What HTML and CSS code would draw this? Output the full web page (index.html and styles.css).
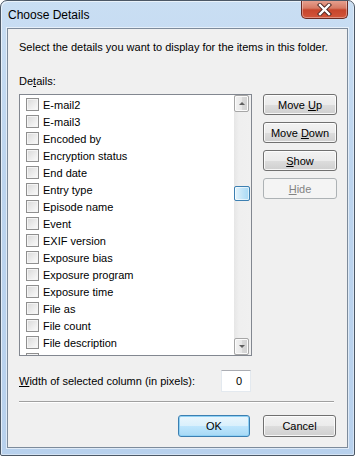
FILE: index.html
```html
<!DOCTYPE html>
<html lang="en">
<head>
  <meta charset="UTF-8">
  <title>Choose Details</title>
  <link rel="stylesheet" href="styles.css">
</head>
<body>
  <div class="window">
    <div class="titlebar">
      <span class="title">Choose Details</span>
      <div class="close-btn">
        <svg width="15" height="13" viewBox="0 0 15 13">
          <path d="M3 2 L12 11 M12 2 L3 11" stroke="#4a2420" stroke-width="4.2" stroke-linecap="square"/>
          <path d="M3 2 L12 11 M12 2 L3 11" stroke="#fff" stroke-width="2.4" stroke-linecap="square"/>
        </svg>
      </div>
    </div>
    <div class="client">
      <p class="intro">Select the details you want to display for the items in this folder.</p>
      <div class="details-label">De<u>t</u>ails:</div>
      <div class="details-row">
        <div class="listbox">
          <ul class="items">
            <li><span class="check"></span><span>E-mail2</span></li>
            <li><span class="check"></span><span>E-mail3</span></li>
            <li><span class="check"></span><span>Encoded by</span></li>
            <li><span class="check"></span><span>Encryption status</span></li>
            <li><span class="check"></span><span>End date</span></li>
            <li><span class="check"></span><span>Entry type</span></li>
            <li><span class="check"></span><span>Episode name</span></li>
            <li><span class="check"></span><span>Event</span></li>
            <li><span class="check"></span><span>EXIF version</span></li>
            <li><span class="check"></span><span>Exposure bias</span></li>
            <li><span class="check"></span><span>Exposure program</span></li>
            <li><span class="check"></span><span>Exposure time</span></li>
            <li><span class="check"></span><span>File as</span></li>
            <li><span class="check"></span><span>File count</span></li>
            <li><span class="check"></span><span>File description</span></li>
            <li><span class="check"></span></li>
          </ul>
          <div class="scrollbar">
            <div class="sb-btn"><span class="arrow-up"></span></div>
            <div class="sb-track"><div class="sb-thumb"></div></div>
            <div class="sb-btn"><span class="arrow-down"></span></div>
          </div>
        </div>
        <div class="side-buttons">
          <div class="btn"><span>Move <u>U</u>p</span></div>
          <div class="btn"><span>Move <u>D</u>own</span></div>
          <div class="btn"><span><u>S</u>how</span></div>
          <div class="btn btn-disabled"><span><u>H</u>ide</span></div>
        </div>
      </div>
      <div class="width-row">
        <span class="width-label"><u>W</u>idth of selected column (in pixels):</span>
        <div class="num-input">0</div>
      </div>
      <div class="separator"></div>
      <div class="footer">
        <div class="btn btn-default btn-ok"><span>OK</span></div>
        <div class="btn btn-cancel"><span>Cancel</span></div>
      </div>
    </div>
  </div>
</body>
</html>
```

FILE: styles.css
```css
* {
  box-sizing: border-box;
}

body {
  margin: 0;
  font-family: "Liberation Sans", Arial, sans-serif;
  font-size: 11px;
  color: #000;
}

.window {
  width: 355px;
  height: 456px;
  border: 1px solid #4c5866;
  border-radius: 7px 7px 2px 2px;
  background: linear-gradient(180deg, #c9def3 0%, #bcd4ee 40%, #b8d1ed 100%);
  box-shadow: inset 1px 1px 0 rgba(255, 255, 255, 0.6), inset -1px -1px 0 rgba(255, 255, 255, 0.4);
  display: flex;
  flex-direction: column;
  overflow: hidden;
}

.titlebar {
  height: 27px;
  display: flex;
  justify-content: space-between;
  align-items: flex-start;
  padding-left: 7px;
  padding-right: 6px;
}

.title {
  line-height: 28px;
  font-size: 12px;
  color: #000;
}

.close-btn {
  width: 47px;
  height: 19px;
  margin-top: -1px;
  border: 1px solid #6a2a22;
  border-top: none;
  border-radius: 0 0 5px 5px;
  background: linear-gradient(180deg, #e8a493 0%, #d67a64 45%, #c7452c 55%, #d2553a 100%);
  box-shadow: inset 0 0 0 1px rgba(255, 255, 255, 0.35);
  display: flex;
  align-items: center;
  justify-content: center;
}

.client {
  flex: 1;
  margin: 0 6px 7px 6px;
  border: 1px solid #7d8b9b;
  box-shadow: 0 0 0 1px rgba(255, 255, 255, 0.55);
  background: #f0f0f0;
  padding: 11px 10px 0 11px;
}

.intro {
  margin: 0;
  line-height: 15px;
  white-space: nowrap;
}

.details-label {
  margin-top: 19px;
  line-height: 15px;
}

.details-row {
  display: flex;
  gap: 11px;
  margin-top: 5px;
}

.listbox {
  width: 233px;
  height: 262px;
  border: 1px solid #828790;
  background: #fff;
  display: flex;
  overflow: hidden;
}

.items {
  flex: 1;
  list-style: none;
  margin: 0;
  padding: 1px 0 0 6px;
  overflow: hidden;
}

.items li {
  height: 17px;
  display: flex;
  align-items: center;
  gap: 4px;
  white-space: nowrap;
}

.check {
  width: 13px;
  height: 13px;
  border: 1px solid #8f8f8f;
  background: linear-gradient(135deg, #d8d8d8 0%, #eeeeee 60%, #fbfbfb 100%);
  box-shadow: inset 0 0 0 1px #f4f4f4;
  flex-shrink: 0;
}

.scrollbar {
  width: 17px;
  display: flex;
  flex-direction: column;
  background: linear-gradient(90deg, #e6e6e6 0%, #efefef 30%, #f0f0f0 100%);
}

.sb-btn {
  width: 15px;
  height: 17px;
  border: 1px solid #a6a6a6;
  border-radius: 2px;
  background: linear-gradient(90deg, #f3f3f3 0%, #e8e8e8 50%, #d9d9d9 51%, #d2d2d2 100%);
  box-shadow: inset 0 0 0 1px #fbfbfb;
  display: flex;
  align-items: center;
  justify-content: center;
}

.arrow-up {
  width: 0;
  height: 0;
  border-left: 3px solid transparent;
  border-right: 3px solid transparent;
  border-bottom: 3px solid #5f5f5f;
}

.arrow-down {
  width: 0;
  height: 0;
  border-left: 3px solid transparent;
  border-right: 3px solid transparent;
  border-top: 3px solid #5f5f5f;
}

.sb-track {
  flex: 1;
}

.sb-thumb {
  width: 16px;
  height: 15px;
  margin-top: 74px;
  border: 1px solid #3c7fb1;
  border-radius: 2px;
  background: linear-gradient(90deg, #e4f4fc 0%, #c4e5f8 50%, #a7d9f5 100%);
  box-shadow: inset 0 0 0 1px rgba(255, 255, 255, 0.6);
}

.side-buttons {
  width: 74px;
  display: flex;
  flex-direction: column;
  gap: 7px;
}

.btn {
  height: 21px;
  border: 1px solid #707070;
  border-radius: 3px;
  background: linear-gradient(180deg, #f2f2f2 0%, #ebebeb 50%, #dddddd 51%, #cfcfcf 100%);
  box-shadow: inset 0 0 0 1px rgba(255, 255, 255, 0.8);
  display: flex;
  align-items: center;
  justify-content: center;
  white-space: nowrap;
}

.btn-disabled {
  border-color: #adb2b5;
  background: #f4f4f4;
  box-shadow: none;
  color: #838383;
}

.width-row {
  display: flex;
  align-items: center;
  margin-top: 14px;
  height: 22px;
}

.width-label {
  width: 202px;
}

.num-input {
  width: 30px;
  height: 22px;
  border: 1px solid #e3e9ef;
  border-top-color: #abadb3;
  background: #fff;
  text-align: right;
  padding-right: 8px;
  line-height: 20px;
}

.separator {
  height: 2px;
  margin: 9px 3px 0 0;
  border-top: 1px solid #a0a0a0;
  border-bottom: 1px solid #fff;
}

.footer {
  display: flex;
  justify-content: flex-end;
  gap: 13px;
  margin-top: 12px;
  padding-right: 1px;
}

.btn-ok {
  width: 72px;
  height: 22px;
}

.btn-cancel {
  width: 73px;
  height: 22px;
}

.btn-default {
  border-color: #3c7fb1;
  background: linear-gradient(180deg, #eaf6fd 0%, #d9f0fc 50%, #bee6fd 51%, #a7d9f5 100%);
  box-shadow: inset 0 0 0 1px #8fd1f5;
}
```
